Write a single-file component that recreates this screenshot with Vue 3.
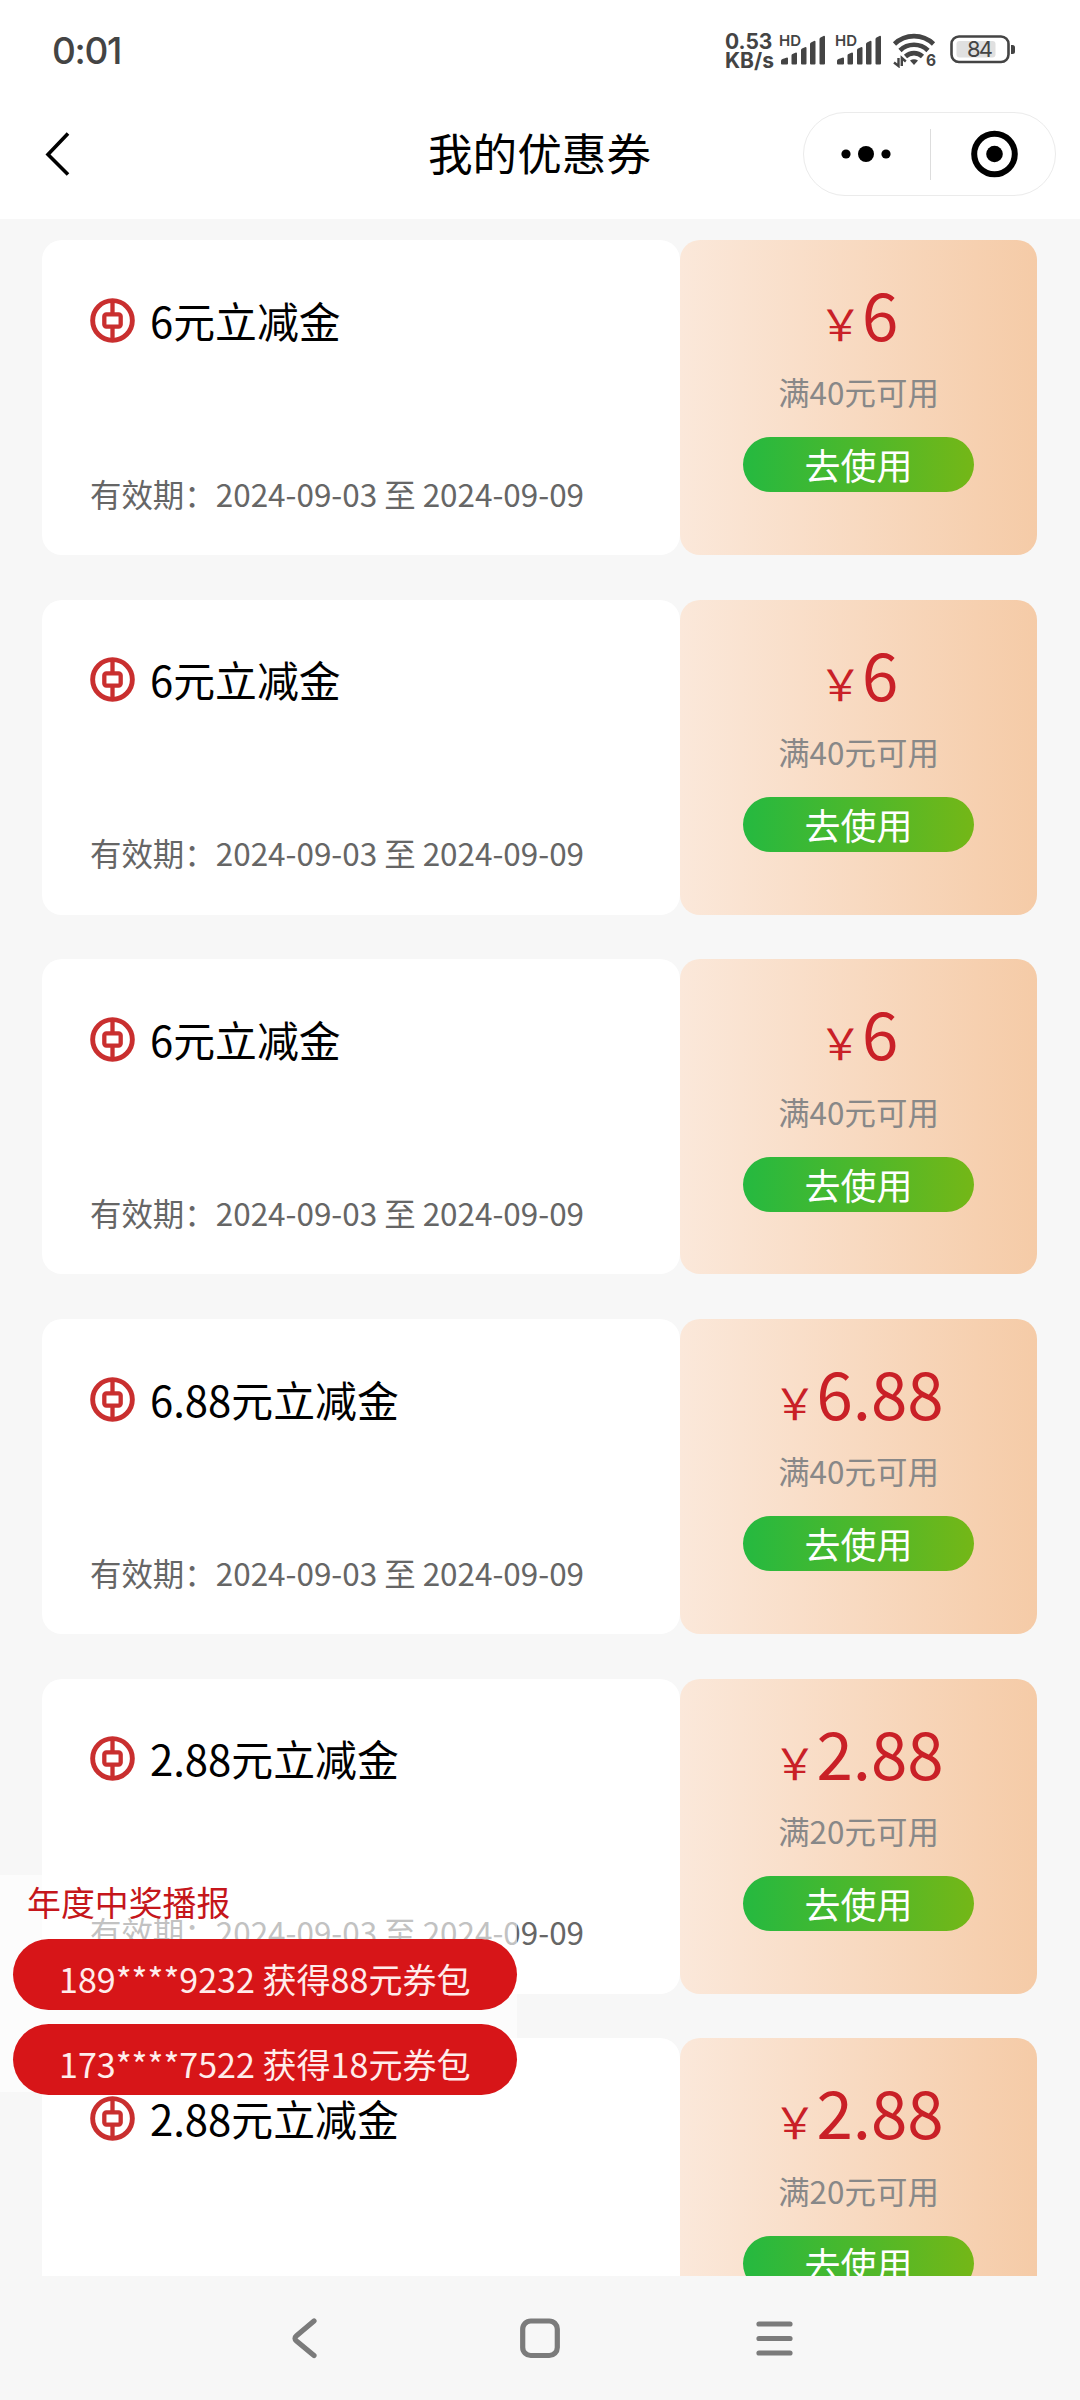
<script setup>
const coupons = [
  { amount: '6', min: 40 },
  { amount: '6', min: 40 },
  { amount: '6', min: 40 },
  { amount: '6.88', min: 40 },
  { amount: '2.88', min: 20 },
  { amount: '2.88', min: 20 }
]
const winners = [
  { phone: '189****9232', prize: 88 },
  { phone: '173****7522', prize: 18 }
]
</script>

<template>
  <div class="screen">
    <header class="status">
      <span class="time">0:01</span>
      <div class="indicators">
        <div class="speed"><span>0.53</span><span>KB/s</span></div>
        <svg v-for="n in 2" :key="n" class="signal" width="48" height="34" viewBox="0 0 48 34">
          <text x="0" y="14" font-size="15" font-weight="600" fill="#444">HD</text>
          <path fill="#444" d="M2 31.500V29q0-1.500 1.500-2l4.500-1.500q1 0 1 1v5q0 1-1 1H3q-1 0-1-1zM12.500 23.500q0-1.200 1-1.600l3.500-1.500q1 0 1 1v10q0 1-1 1h-3.500q-1 0-1-1zM22 18q0-1 1-1.500l3.500-1.500q1 0 1 1v15.500q0 1-1 1H23q-1 0-1-1zM31 12q0-1 1-1.500l3.500-1.700q1 0 1 1v21.700q0 1-1 1H32q-1 0-1-1zM40.500 7q0-1 1-1.500l3.500-1.700q1 0 1 1v26.700q0 1-1 1h-3.500q-1 0-1-1z" />
        </svg>
        <svg class="wifi" width="46" height="36" viewBox="0 0 46 36">
          <g fill="none" stroke="#444" stroke-width="4.600">
            <path d="M2.500 12a28 28 0 0 1 39 0" />
            <path d="M8 18.500a20 20 0 0 1 28 0" />
            <path d="M13.500 24.500a12.500 12.500 0 0 1 17 0" />
          </g>
          <path fill="#444" d="M18 28.500q4-2.500 8 0L22 33z" />
          <path fill="none" stroke="#444" stroke-width="2.400" d="M6.500 26v8L2 30.500M9.800 34v-8l4 3.500" />
          <text x="34" y="34" font-size="15.500" font-weight="700" fill="#444">6</text>
        </svg>
        <svg class="battery" width="66" height="30" viewBox="0 0 66 30">
          <rect x="1.500" y="1.500" width="57" height="25.500" rx="7.500" fill="none" stroke="#444" stroke-width="2.600" />
          <rect x="6.500" y="6" width="39" height="16.500" rx="3" fill="#e0e0e0" />
          <text x="17" y="22.300" font-size="22" textLength="26" fill="#444">84</text>
          <path fill="#444" d="M61 10h1.500q2.500 0 2.500 2.500v4q0 2.500-2.500 2.500H61z" />
        </svg>
      </div>
    </header>

    <nav class="titlebar">
      <svg class="back" width="28" height="50" viewBox="0 0 28 50">
        <path d="M24 4.500 4 25.500 24 45.500" fill="none" stroke="#000" stroke-width="3.600" />
      </svg>
      <h1>我的优惠券</h1>
      <div class="capsule">
        <svg width="126" height="52" viewBox="0 0 126 52">
          <circle cx="42" cy="26" r="4.600" /><circle cx="62" cy="26" r="8" /><circle cx="82" cy="26" r="4.600" />
        </svg>
        <i></i>
        <svg width="124" height="52" viewBox="0 0 124 52">
          <circle cx="63.500" cy="26" r="20.300" fill="none" stroke="#000" stroke-width="6" /><circle cx="63.500" cy="26" r="8.300" />
        </svg>
      </div>
    </nav>

    <main class="list">
      <article v-for="(c, i) in coupons" :key="i" class="coupon">
        <section class="info">
          <div class="name">
            <svg width="45" height="45" viewBox="0 0 44 44" fill="none" stroke="#c92f2f">
              <circle cx="22" cy="22" r="19.400" stroke-width="4.800" />
              <rect x="14" y="16" width="16" height="12" rx="2" stroke-width="4.200" />
              <path d="M22 3v12M22 29v12" stroke-width="4.200" />
            </svg>
            <h2>{{ c.amount }}元立减金</h2>
          </div>
          <p>有效期：2024-09-03 至 2024-09-09</p>
        </section>
        <section class="value">
          <div class="price"><small>￥</small><span>{{ c.amount }}</span></div>
          <p>满{{ c.min }}元可用</p>
          <button>去使用</button>
        </section>
      </article>
    </main>

    <aside class="broadcast">
      <h3>年度中奖播报</h3>
      <div v-for="w in winners" :key="w.phone" class="pill">{{ w.phone }} 获得{{ w.prize }}元券包</div>
    </aside>

    <footer class="keys">
      <svg width="44" height="44" viewBox="0 0 44 44"><path d="M31 5 13.500 19.800q-3 2.600 0 5.200L31 39.500" /></svg>
      <svg width="44" height="44" viewBox="0 0 44 44"><rect x="4.700" y="5" width="34.600" height="34.500" rx="8" /></svg>
      <svg width="44" height="44" viewBox="0 0 44 44"><path d="M6 8h31M6 22.500h31M6 37h31" /></svg>
    </footer>
  </div>
</template>

<style>
body { margin: 0; background: #f7f7f7; }
</style>

<style scoped>
.screen {
  position: relative;
  display: flex;
  flex-direction: column;
  width: 1080px;
  height: 2400px;
  overflow: hidden;
  background: #f7f7f7;
  font-family: "Noto Sans CJK SC", sans-serif;
  color: #000;
}
h1, h2, h3, p { margin: 0; font-weight: 400; }
.status {
  flex: none;
  display: flex;
  justify-content: space-between;
  box-sizing: border-box;
  height: 100px;
  padding: 0 64px 0 52px;
  background: #fff;
  color: #444;
  font-family: Inter, sans-serif;
}
.time { font-size: 37px; font-weight: 500; line-height: 101px; letter-spacing: -1.300px; }
.indicators { display: flex; align-items: flex-start; padding-top: 32px; }
.speed {
  display: flex;
  flex-direction: column;
  width: 54px;
  padding-top: 1px;
  font-size: 21px;
  font-weight: 650;
  line-height: 18.500px;
}
.signal { margin-right: 8px; }
.wifi { margin: 0 12px 0 1px; }
.battery { margin-top: 2.500px; }
.titlebar {
  flex: none;
  display: grid;
  grid-template-columns: 1fr auto 1fr;
  align-items: center;
  height: 108px;
  padding: 0 24px 11px 44px;
  background: #fff;
}
h1 { font-size: 44.600px; line-height: 64px; margin: -4px 0 0 -21px; }
.capsule {
  justify-self: end;
  display: flex;
  align-items: center;
  box-sizing: border-box;
  width: 253px;
  height: 84px;
  border: 1.500px solid #ebebeb;
  border-radius: 42px;
}
.capsule i { width: 1px; height: 51px; background: #ddd; }
.list {
  flex: 1;
  min-height: 0;
  overflow: hidden;
  display: flex;
  flex-direction: column;
  gap: 44.700px;
  padding: 21px 43px 0 42px;
}
.coupon { flex: none; display: flex; height: 315px; }
.info {
  display: flex;
  flex-direction: column;
  justify-content: space-between;
  box-sizing: border-box;
  width: 638px;
  padding: 50px 48px 38.500px;
  border-radius: 20px;
  background: #fff;
}
.name { display: flex; align-items: center; gap: 15px; height: 60px; }
h2 { font-size: 41.860px; line-height: 60px; margin-top: -1px; }
.info p { font-size: 31.450px; line-height: 46px; color: #666; white-space: nowrap; }
.value {
  display: flex;
  flex-direction: column;
  align-items: center;
  width: 357px;
  border-radius: 20px;
  background: linear-gradient(90deg, #fbe8da, #f5cba7);
}
.price { display: flex; align-items: baseline; height: 94px; margin-top: 26px; line-height: 94px; color: #c92027; }
.price small { font-size: 43.200px; }
.price span { font-size: 65.500px; }
.value p { font-size: 31.450px; line-height: 46px; margin-top: 9.300px; color: #888; }
button {
  width: 231px;
  height: 55px;
  margin-top: 22px;
  padding: 0;
  border: 0;
  border-radius: 28px;
  background: linear-gradient(90deg, #25b940, #74b717);
  font: 36px/55px "Noto Sans CJK SC", sans-serif;
  color: #fff;
}
.broadcast {
  position: absolute;
  left: 0;
  top: 1875px;
  width: 517px;
  height: 217px;
  background: rgba(255, 255, 255, .6);
}
h3 { padding-left: 27px; font-size: 33.900px; line-height: 53px; height: 64px; color: #c5161b; }
.pill {
  height: 71px;
  margin: 0 0 14px 13px;
  padding-left: 46px;
  border-radius: 36px;
  background: #d71518;
  color: #ffeceb;
  font-size: 34.050px;
  line-height: 79px;
  white-space: nowrap;
}
.keys {
  flex: none;
  display: flex;
  justify-content: center;
  gap: 191px;
  box-sizing: border-box;
  height: 124px;
  padding-top: 40px;
  background: #f7f7f7;
}
.keys svg { fill: none; stroke: #7b7b7b; stroke-width: 5.200; stroke-linecap: round; }
</style>
